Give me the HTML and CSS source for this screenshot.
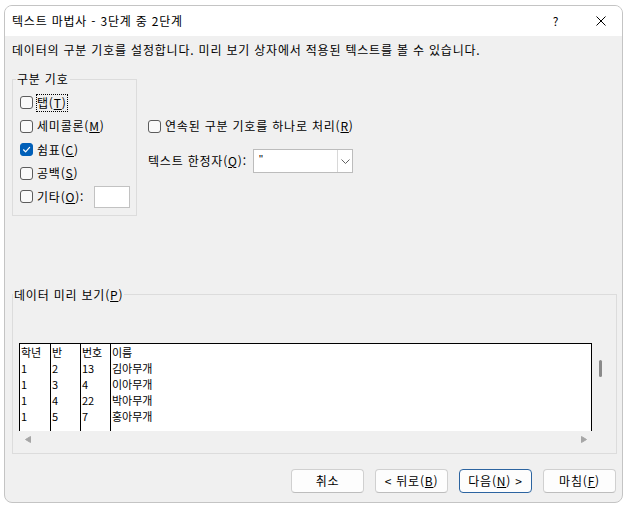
FILE: index.html
```html
<!DOCTYPE html>
<html lang="ko">
<head>
<meta charset="utf-8">
<title>텍스트 마법사</title>
<link rel="stylesheet" href="styles.css">
</head>
<body>
<div class="window">
  <div class="titlebar">
    <span class="title">텍스트 마법사 - 3단계 중 2단계</span>
    <span class="tb-help">?</span>
    <span class="tb-close"><svg width="10" height="10" viewBox="0 0 10 10"><path d="M0.5 0.5 L9.5 9.5 M9.5 0.5 L0.5 9.5" stroke="#000" stroke-width="1" fill="none"/></svg></span>
  </div>
  <div class="content">
    <p class="desc">데이터의 구분 기호를 설정합니다. 미리 보기 상자에서 적용된 텍스트를 볼 수 있습니다.</p>
    <div class="top">
      <fieldset class="delims">
        <legend>구분 기호</legend>
        <label class="row"><span class="cb"></span><span class="focus">탭(<u>T</u>)</span></label>
        <label class="row"><span class="cb"></span><span>세미콜론(<u>M</u>)</span></label>
        <label class="row"><span class="cb on"><svg width="11" height="11" viewBox="0 0 11 11"><path d="M2.5 5.8 L4.6 7.8 L8.6 3.4" stroke="#fff" stroke-width="1.2" fill="none" stroke-linecap="round" stroke-linejoin="round"/></svg></span><span>쉼표(<u>C</u>)</span></label>
        <label class="row"><span class="cb"></span><span>공백(<u>S</u>)</span></label>
        <label class="row"><span class="cb"></span><span>기타(<u>O</u>):</span><span class="txt"></span></label>
      </fieldset>
      <div class="options">
        <label class="row opt"><span class="cb"></span><span>연속된 구분 기호를 하나로 처리(<u>R</u>)</span></label>
        <div class="qual">
          <span class="qlabel">텍스트 한정자(<u>Q</u>):</span>
          <div class="combo">
            <span class="cval">"</span>
            <span class="carrow"><svg width="9" height="5" viewBox="0 0 9 5"><path d="M0.5 0.5 L4.5 4.5 L8.5 0.5" stroke="#606060" stroke-width="1" fill="none"/></svg></span>
          </div>
        </div>
      </div>
    </div>
    <fieldset class="preview">
      <legend>데이터 미리 보기(<u>P</u>)</legend>
      <div class="pv">
        <div class="pv-text">
          <div class="col c1"><div>학년</div><div>1</div><div>1</div><div>1</div><div>1</div></div>
          <div class="col"><div>반</div><div>2</div><div>3</div><div>4</div><div>5</div></div>
          <div class="col"><div>번호</div><div>13</div><div>4</div><div>22</div><div>7</div></div>
          <div class="col last"><div>이름</div><div>김아무개</div><div>이아무개</div><div>박아무개</div><div>홍아무개</div></div>
        </div>
        <div class="vscroll"><span class="thumb"></span></div>
        <div class="hscroll">
          <svg width="6" height="7" viewBox="0 0 6 7"><path d="M5.5 0.5 L5.5 6.5 L0.5 3.5 Z" fill="#a6a6a6" stroke="#a6a6a6" stroke-linejoin="round"/></svg>
          <svg width="6" height="7" viewBox="0 0 6 7"><path d="M0.5 0.5 L0.5 6.5 L5.5 3.5 Z" fill="#a6a6a6" stroke="#a6a6a6" stroke-linejoin="round"/></svg>
        </div>
      </div>
    </fieldset>
    <div class="buttons">
      <button class="btn">취소</button>
      <button class="btn">&lt; 뒤로(<u>B</u>)</button>
      <button class="btn default">다음(<u>N</u>) &gt;</button>
      <button class="btn">마침(<u>F</u>)</button>
    </div>
  </div>
</div>
</body>
</html>
```
FILE: styles.css
```css
* { box-sizing: border-box; }
body {
  margin: 0;
  background: #fff;
  font-family: "Noto Sans CJK KR", "Noto Sans", sans-serif;
  font-size: 12px;
  letter-spacing: 0.8px;
  color: #000;
}
.window {
  margin: 5px 0 0 4px;
  width: 619px;
  height: 498px;
  border: 1px solid #c4c4c4;
  border-radius: 8px;
  background: #f0f0f0;
  overflow: hidden;
  display: flex;
  flex-direction: column;
}
.titlebar {
  flex: none;
  height: 30px;
  background: #fff;
  display: flex;
  align-items: center;
  padding-left: 7px;
}
.title { flex: 1; line-height: 16px; }
.tb-help { width: 48px; text-align: center; line-height: 16px; }
.tb-close { width: 42px; display: flex; justify-content: center; align-items: center; }
.content {
  flex: 1;
  display: flex;
  flex-direction: column;
  padding: 0 5px 0 7px;
}
.desc { margin: 6px 0 0; line-height: 16px; white-space: nowrap; }
.top { display: flex; gap: 11px; margin-top: 14px; }
fieldset {
  margin: 0;
  border: 1px solid #dcdcdc;
  min-inline-size: 0;
}
legend { line-height: 14px; padding: 0 1px; }
.delims { width: 125px; padding: 5px 6px 6px 7px; }
.delims legend { margin-left: -4px; }
.row {
  display: flex;
  align-items: center;
  gap: 4px;
  height: 23.5px;
  line-height: 16px;
  white-space: nowrap;
}
.cb {
  flex: none;
  width: 13px;
  height: 13px;
  border: 1px solid #5c5c5c;
  border-radius: 3px;
  background: #f9f9f9;
  display: flex;
  align-items: center;
  justify-content: center;
}
.cb.on { background: #005fb8; border-color: #005fb8; }
.focus { outline: 1px dotted #000; outline-offset: 0; }
.txt {
  margin-left: auto;
  width: 36px;
  height: 22px;
  background: #fff;
  border: 1px solid #c2c2c2;
}
.options { display: flex; flex-direction: column; gap: 11px; padding-top: 42px; }
.opt { height: 24px; }
.qual { display: flex; align-items: center; height: 24px; }
.qlabel { width: 105px; line-height: 16px; white-space: nowrap; }
.combo {
  width: 100px;
  height: 24px;
  background: #fff;
  border: 1px solid #bcbcbc;
  display: flex;
}
.cval {
  flex: 1;
  padding: 2px 0 0 5px;
  line-height: 14px;
  color: #000;
  font-family: "Liberation Sans", sans-serif;
  font-size: 11px;
}
.carrow {
  width: 15px;
  border-left: 1px solid #d8d8d8;
  display: flex;
  align-items: center;
  justify-content: center;
}
.preview { margin-top: 72px; padding: 41px 7px 5px 6px; }
.preview legend { margin-left: -6px; }
.pv {
  display: grid;
  grid-template-columns: 573px 17px;
  grid-template-rows: 88px 17px;
}
.pv-text {
  background: #fff;
  border: 1px solid #000;
  border-bottom: none;
  display: flex;
  font-size: 11px;
  letter-spacing: 0;
  line-height: 16px;
  overflow: hidden;
}
.col { width: 30px; height: 100%; border-right: 1px solid #000; padding-left: 1px; white-space: nowrap; }
.col.c1 { width: 31px; }
.col.last { flex: 1; border-right: none; }
.vscroll { position: relative; }
.thumb {
  position: absolute;
  left: 7px;
  top: 17px;
  width: 3px;
  height: 17px;
  border-radius: 1.5px;
  background: #8a8a8a;
}
.hscroll {
  display: flex;
  align-items: center;
  justify-content: space-between;
  padding: 0 5px 0 6px;
}
.buttons {
  display: flex;
  justify-content: flex-end;
  gap: 11px;
  margin: 15px 1px 0 0;
}
.btn {
  width: 73px;
  height: 24px;
  padding: 0;
  font-family: inherit;
  font-size: 12px;
  letter-spacing: 0.8px;
  line-height: 16px;
  color: #000;
  background: #fdfdfd;
  border: 1px solid #d0d0d0;
  border-bottom-color: #bdbdbd;
  border-radius: 4px;
}
.btn.default { border-color: #2c64a0; }
```
